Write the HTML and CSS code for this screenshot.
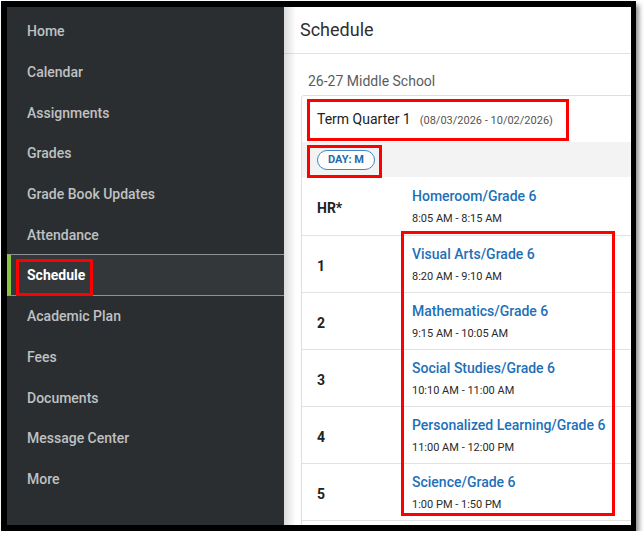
FILE: index.html
```html
<!DOCTYPE html>
<html lang="en">
<head>
<meta charset="utf-8">
<title>Schedule</title>
<link rel="stylesheet" href="styles.css">
</head>
<body>
<div class="frame">
  <nav class="sidebar">
    <a class="nav-item">Home</a>
    <a class="nav-item">Calendar</a>
    <a class="nav-item">Assignments</a>
    <a class="nav-item">Grades</a>
    <a class="nav-item">Grade Book Updates</a>
    <a class="nav-item">Attendance</a>
    <a class="nav-item active">Schedule</a>
    <a class="nav-item">Academic Plan</a>
    <a class="nav-item">Fees</a>
    <a class="nav-item">Documents</a>
    <a class="nav-item">Message Center</a>
    <a class="nav-item">More</a>
  </nav>
  <main class="main">
    <header class="page-header">Schedule</header>
    <section class="content">
      <div class="school">26-27 Middle School</div>
      <div class="card">
        <div class="term">
          <span class="term-name">Term Quarter 1</span>
          <span class="term-dates">(08/03/2026 - 10/02/2026)</span>
        </div>
        <div class="day-row"><span class="day-pill">DAY: M</span></div>
        <div class="period">
          <div class="period-num">HR*</div>
          <div class="course"><a class="course-name">Homeroom/Grade 6</a><div class="course-time">8:05 AM - 8:15 AM</div></div>
        </div>
        <div class="period">
          <div class="period-num">1</div>
          <div class="course"><a class="course-name">Visual Arts/Grade 6</a><div class="course-time">8:20 AM - 9:10 AM</div></div>
        </div>
        <div class="period">
          <div class="period-num">2</div>
          <div class="course"><a class="course-name">Mathematics/Grade 6</a><div class="course-time">9:15 AM - 10:05 AM</div></div>
        </div>
        <div class="period">
          <div class="period-num">3</div>
          <div class="course"><a class="course-name">Social Studies/Grade 6</a><div class="course-time">10:10 AM - 11:00 AM</div></div>
        </div>
        <div class="period">
          <div class="period-num">4</div>
          <div class="course"><a class="course-name">Personalized Learning/Grade 6</a><div class="course-time">11:00 AM - 12:00 PM</div></div>
        </div>
        <div class="period">
          <div class="period-num">5</div>
          <div class="course"><a class="course-name">Science/Grade 6</a><div class="course-time">1:00 PM - 1:50 PM</div></div>
        </div>
        <div class="period"></div>
      </div>
    </section>
  </main>
  <!-- highlight boxes drawn over the page -->
  <div class="mark mark-nav"></div>
  <div class="mark mark-term"></div>
  <div class="mark mark-day"></div>
  <div class="mark mark-courses"></div>
</div>
</body>
</html>
```

FILE: styles.css
```css
html, body {
  margin: 0;
  padding: 0;
  background: #ffffff;
}

body {
  font-family: Roboto, "Liberation Sans", Arial, sans-serif;
  padding: 1px 0 0 1px;
}

.frame {
  position: relative;
  width: 624px;
  height: 518px;
  border-style: solid;
  border-color: #000000;
  border-width: 6px 5px 6px 6px;
  box-shadow: 3px 4px 5px rgba(0, 0, 0, 0.45);
  display: flex;
  overflow: hidden;
  background: #ffffff;
}

/* left navigation */
.sidebar {
  width: 277px;
  flex: none;
  background: #2b2e31;
  padding-top: 4px;
  display: flex;
  flex-direction: column;
}

.nav-item {
  height: 40.7px;
  display: flex;
  align-items: center;
  padding-left: 20px;
  color: #bfc1c2;
  font-size: 14px;
  font-weight: 500;
  box-sizing: border-box;
}

.nav-item.active {
  background: #33373a;
  color: #ffffff;
  font-weight: 700;
  border-top: 1px solid #8e9193;
  border-bottom: 1px solid #8e9193;
  border-left: 4px solid #8cc63f;
  padding-left: 16px;
  height: 42px;
  margin: -0.65px 0;
}

/* main area */
.main {
  flex: 1;
  min-width: 0;
  position: relative;
  background: #ffffff;
  overflow: hidden;
}

.main::before {
  content: "";
  position: absolute;
  left: 0;
  top: 0;
  bottom: 0;
  width: 12px;
  background: linear-gradient(to right, rgba(0, 0, 0, 0.14), rgba(0, 0, 0, 0));
  z-index: 1;
}

.page-header {
  height: 46px;
  border-bottom: 1px solid #e3e3e3;
  display: flex;
  align-items: center;
  padding-left: 16px;
  padding-bottom: 2px;
  box-sizing: border-box;
  height: 47px;
  font-size: 18px;
  color: #2f2f2f;
}

.content {
  padding: 17px 0 0 17px;
}

.school {
  font-size: 14px;
  color: #5c5c5c;
  padding-left: 7px;
  height: 24px;
  line-height: 20px;
}

.card {
  width: 420px;
  border: 1px solid #dedede;
  border-radius: 3px 0 0 0;
}

.term {
  height: 46px;
  display: flex;
  align-items: center;
  padding-left: 15px;
  gap: 9px;
}

.term-name {
  font-size: 14px;
  color: #222222;
}

.term-dates {
  font-size: 11px;
  color: #555555;
  padding-top: 2px;
}

.day-row {
  height: 35px;
  background: #f3f3f3;
  display: flex;
  align-items: center;
  padding-left: 15px;
  box-sizing: border-box;
}

.day-pill {
  width: 56px;
  height: 18px;
  border: 1px solid #3c87c6;
  border-radius: 10px;
  display: flex;
  align-items: center;
  justify-content: center;
  font-size: 11px;
  font-weight: 700;
  color: #1f6bab;
  background: #ffffff;
}

.period {
  height: 57px;
  border-top: 1px solid #e2e2e2;
  display: flex;
  align-items: center;
  box-sizing: border-box;
}

.period:nth-of-type(3) {
  border-top: none;
  height: 58px;
}

.period-num {
  width: 95px;
  padding-left: 15px;
  padding-top: 3px;
  font-size: 14px;
  font-weight: 700;
  color: #222222;
  flex: none;
}

.course {
  display: flex;
  flex-direction: column;
  gap: 8px;
  padding-top: 1px;
}

.course-name {
  font-size: 14px;
  font-weight: 500;
  color: #1d70b8;
}

.course-time {
  font-size: 11px;
  color: #2a2a2a;
}

/* red highlight outlines */
.mark {
  position: absolute;
  border: 3px solid #ff0000;
  box-sizing: border-box;
  pointer-events: none;
  z-index: 2;
}

.mark-nav {
  left: 9px;
  top: 252px;
  width: 77px;
  height: 37px;
}

.mark-term {
  left: 300px;
  top: 92px;
  width: 262px;
  height: 42px;
}

.mark-day {
  left: 300px;
  top: 138px;
  width: 75px;
  height: 33px;
}

.mark-courses {
  left: 394px;
  top: 224px;
  width: 214px;
  height: 285px;
}
```
